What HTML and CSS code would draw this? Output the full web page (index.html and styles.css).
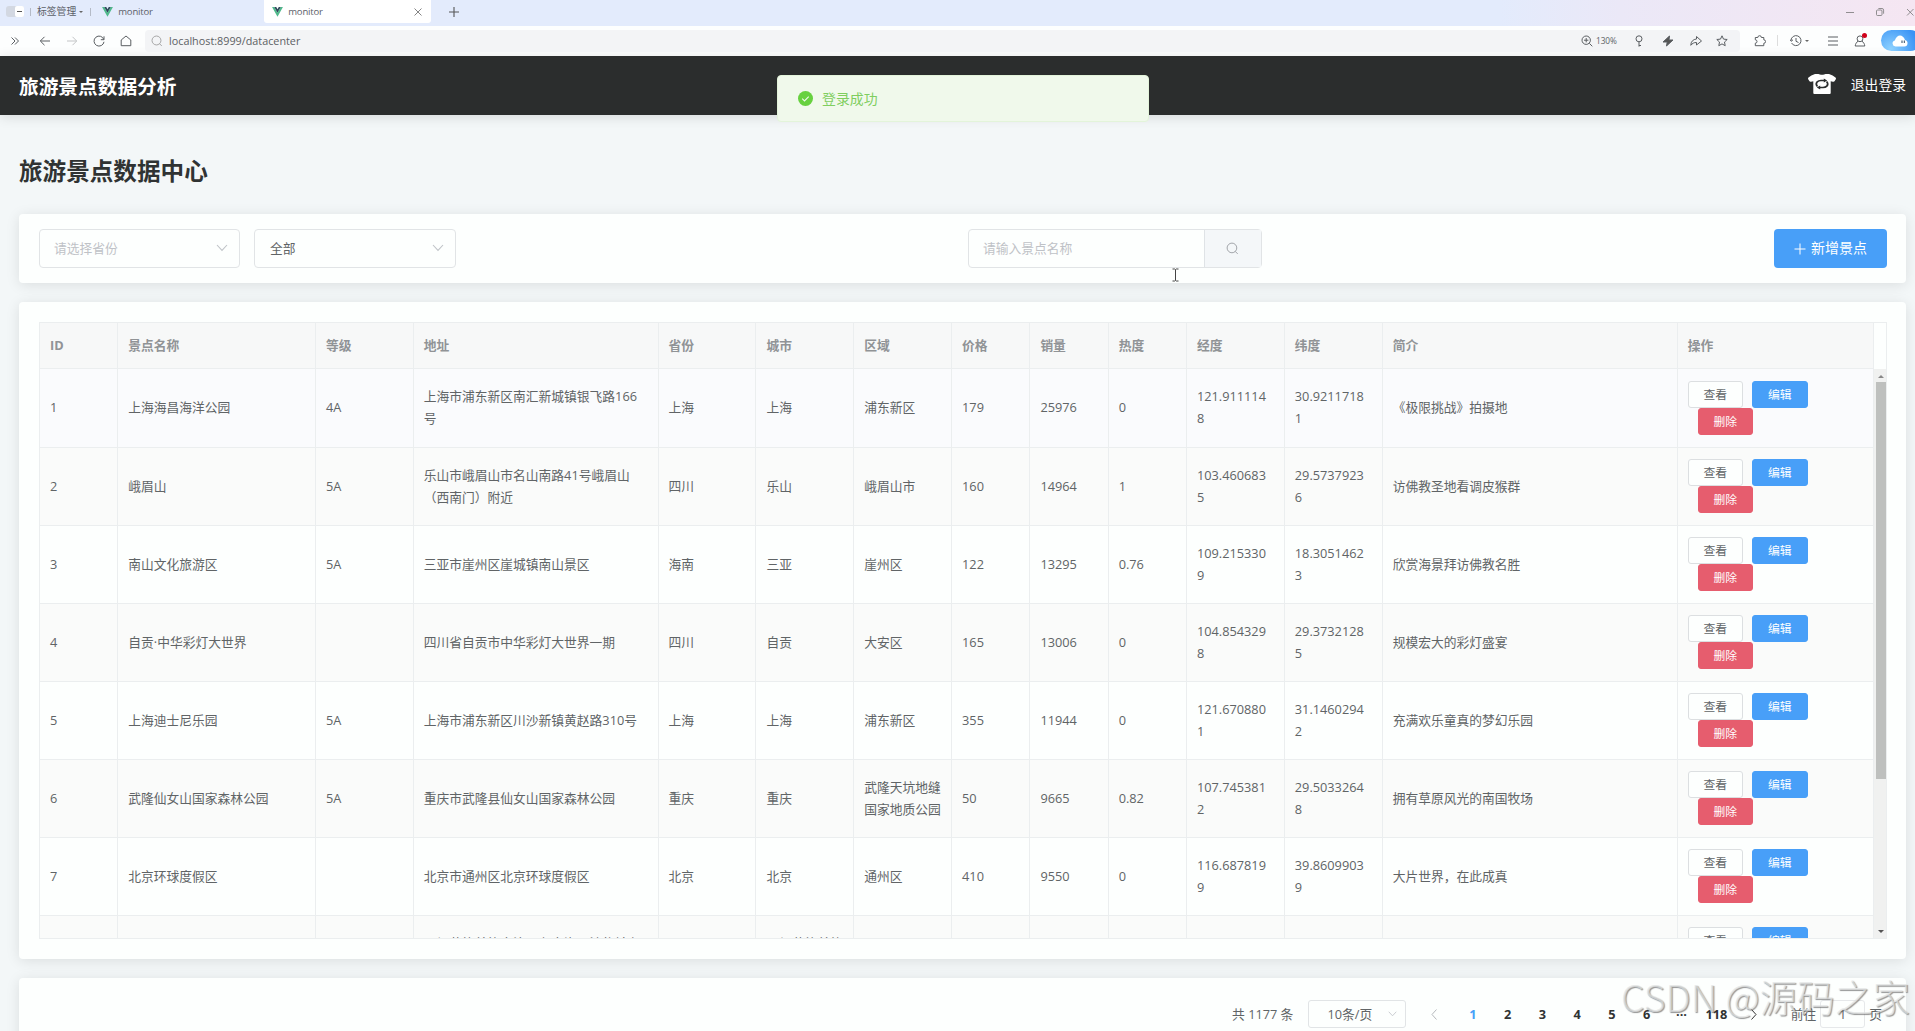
FILE: index.html
```html
<!DOCTYPE html>
<html lang="zh-CN">
<head>
<meta charset="utf-8">
<title>monitor</title>
<link rel="stylesheet" href="styles.css">
</head>
<body>
<svg class="defs" width="0" height="0" aria-hidden="true">
  <symbol id="vue" viewBox="0 0 12 11"><path d="M0 0h2.4L6 6.2 9.6 0H12L6 10.6z" fill="#4fba8b"/><path d="M2.4 0h2.2L6 2.4 7.4 0h2.2L6 6.2z" fill="#2f4a5c"/></symbol>
  <symbol id="chev" viewBox="0 0 12 8"><path d="M1 1l5 5.4L11 1" fill="none" stroke="currentColor" stroke-width="1.1"/></symbol>
  <symbol id="search" viewBox="0 0 14 14"><circle cx="6.4" cy="6.4" r="5.2" fill="none" stroke="currentColor"/><path d="M9.8 10l2.8 2.8" stroke="currentColor"/></symbol>
</svg>

<div class="tabs">
  <span class="panel-toggle"><i></i></span>
  <span class="sep"></span>
  <span class="tab-manage">标签管理</span><span class="caret"></span>
  <span class="sep sep-2"></span>
  <div class="tab"><svg class="vue"><use href="#vue"/></svg>monitor</div>
  <div class="tab active"><svg class="vue"><use href="#vue"/></svg>monitor
    <svg class="close" viewBox="0 0 8 8"><path d="M.5.5l7 7M7.5.5l-7 7"/></svg></div>
  <svg class="plus" viewBox="0 0 10 10"><path d="M5 0v10M0 5h10"/></svg>
  <div class="win">
    <svg viewBox="0 0 10 10"><path d="M1 5.5h8"/></svg>
    <svg viewBox="0 0 10 10"><rect x="1.5" y="3" width="5.5" height="5.5" rx="1"/><path d="M3.4 1.5h3.6a1.6 1.6 0 0 1 1.6 1.6v3.6"/></svg>
    <svg viewBox="0 0 10 10"><path d="M2 2l6.5 6.5M8.5 2L2 8.5"/></svg>
  </div>
</div>

<div class="toolbar">
  <div class="nav">
    <svg viewBox="0 0 12 12"><path d="M2.5 2.500l3.500 3.500-3.500 3.500M6 2.500l3.500 3.500L6 9.500"/></svg>
    <svg viewBox="0 0 12 12"><path d="M11 6H1.500M5.500 1.800L1.300 6l4.200 4.200"/></svg>
    <svg class="off" viewBox="0 0 12 12"><path d="M1 6h9.500M6.500 1.800L10.700 6l-4.200 4.200"/></svg>
    <svg viewBox="0 0 12 12"><path d="M10.800 4.500A5 5 0 1 0 11 6.800M11 1.300v3.400H7.800"/></svg>
    <svg viewBox="0 0 12 12"><path d="M1.200 5L6 1l4.800 4v5.700H1.200z"/></svg>
  </div>
  <div class="address">
    <svg class="lens"><use href="#search"/></svg>
    <span class="url">localhost:8999/datacenter</span>
    <svg viewBox="0 0 12 12"><circle cx="5.200" cy="5.200" r="4.200"/><path d="M8.300 8.300l3 3M3 5.200h4.400M5.200 3v4.400"/></svg>
    <span class="pct">130%</span>
    <svg class="key" viewBox="0 0 12 12"><circle cx="6" cy="3.800" r="3"/><path d="M6 6.800v4.800M6 10.500h2"/></svg>
    <svg class="bolt" viewBox="0 0 12 12"><path d="M7.500 1L1 7h4.200L4.500 11 11 5H7z"/></svg>
    <svg class="share" viewBox="0 0 12 12"><path d="M6.500 1.500L11.500 6l-5 4V7.500C4 7.400 2.300 8.400.8 10.300.8 6.500 3.200 4.300 6.500 4z"/></svg>
    <svg class="star" viewBox="0 0 12 12"><path d="M6 .8l1.500 3.300 3.700.4-2.700 2.500.7 3.700L6 8.900l-3.200 1.800.7-3.700L.8 4.500l3.700-.4z"/></svg>
  </div>
  <div class="tools">
    <svg class="puzzle" viewBox="0 0 12 12"><path d="M1.300 2.500h2.500a1.800 1.800 0 0 1 3.600 0h2.400v2.300a1.700 1.700 0 0 1 0 3.500v2.400H1.300V8.200a1.700 1.700 0 0 0 0-3.400z"/></svg>
    <span class="bar"></span>
    <svg class="hist" viewBox="0 0 12 12"><path d="M1.600 8A5 5 0 1 0 1 5.500M0 4.500l1.200 1.800L3 4.800M6 3v3.300l2.500 1.200"/></svg>
    <span class="caret"></span>
    <svg class="menu" viewBox="0 0 12 12"><path d="M1 2h10M1 6h10M1 10h10"/></svg>
    <span class="user"><svg viewBox="0 0 12 12"><circle cx="6" cy="3.800" r="2.900"/><path d="M4 6.200C2.400 7.400 1.500 8.700 1.200 11h9.600C10.500 8.700 9.600 7.400 8 6.200"/></svg><b></b></span>
    <span class="cloud"><svg viewBox="0 0 16 12"><path d="M3.500 11.500a3 3 0 0 1-.7-5.900C4 2 6 .5 8 .5s4 1.500 5 4.500a3.300 3.300 0 0 1-.5 6.500z" fill="#fff"/><path d="M10 5.500v2.500M12.300 5.500v2.500" stroke="#2b4660" stroke-width="1"/></svg></span>
  </div>
</div>

<header class="app-header">
  <span class="brand">旅游景点数据分析</span>
  <svg class="shirt" viewBox="0 0 28 20"><path d="M7 0h3.500c1.300.9 5.700.9 7 0H21q4 1 6.500 3.500.8.800.3 1.700L26.500 7.300Q26 8 25 7.700L22.700 7.200V19q0 1-1 1H6.300q-1 0-1-1V7.200L3 7.700Q2 8 1.500 7.300L.2 5.200Q-.3 4.300.5 3.500 3 1 7 0z" fill="#fff"/><g fill="none" stroke="#2b2d2d" stroke-width="1.700"><path d="M9.400 12.500Q7.200 10 9.200 7.800 10.500 6.500 13 6.500h3.500"/><path d="M18.600 7.500Q20.800 10 18.800 12.200 17.500 13.500 15 13.500h-3.500"/></g><path d="M15.800 4.600l3.400 2-3.400 1.900zM12.200 11.500l-3.400 1.900 3.400 2z" fill="#2b2d2d"/></svg>
  <span class="logout">退出登录</span>
</header>

<main>
  <h1>旅游景点数据中心</h1>

  <section class="card filters">
    <div class="select ph"><span>请选择省份</span><svg><use href="#chev"/></svg></div>
    <div class="select"><span>全部</span><svg><use href="#chev"/></svg></div>
    <div class="search"><span>请输入景点名称</span><b><svg><use href="#search"/></svg></b></div>
    <div class="add"><svg viewBox="0 0 12 12"><path d="M6 .5v11M.5 6h11"/></svg><span>新增景点</span></div>
  </section>

  <section class="card table-card">
    <div class="table-box">
      <table class="grid head">
        <colgroup><col class="w78"><col class="w198"><col class="w98"><col class="w245"><col class="w98"><col class="w98"><col class="w98"><col class="w78"><col class="w78"><col class="w78"><col class="w98"><col class="w98"><col class="w295"><col class="w196"></colgroup>
        <tr><th>ID</th><th>景点名称</th><th>等级</th><th>地址</th><th>省份</th><th>城市</th><th>区域</th><th>价格</th><th>销量</th><th>热度</th><th>经度</th><th>纬度</th><th>简介</th><th>操作</th></tr>
      </table>
      <div class="body">
        <table class="grid">
          <colgroup><col class="w78"><col class="w198"><col class="w98"><col class="w245"><col class="w98"><col class="w98"><col class="w98"><col class="w78"><col class="w78"><col class="w78"><col class="w98"><col class="w98"><col class="w295"><col class="w196"></colgroup>
          <tr class="hover"><td>1</td><td>上海海昌海洋公园</td><td>4A</td><td>上海市浦东新区南汇新城镇银飞路166号</td><td>上海</td><td>上海</td><td>浦东新区</td><td>179</td><td>25976</td><td>0</td><td class="geo">121.9111148</td><td class="geo">30.92117181</td><td>《极限挑战》拍摄地</td><td><span class="btn">查看</span><span class="btn edit">编辑</span><span class="btn del">删除</span></td></tr>
          <tr><td>2</td><td>峨眉山</td><td>5A</td><td>乐山市峨眉山市名山南路41号峨眉山（西南门）附近</td><td>四川</td><td>乐山</td><td>峨眉山市</td><td>160</td><td>14964</td><td>1</td><td class="geo">103.4606835</td><td class="geo">29.57379236</td><td>访佛教圣地看调皮猴群</td><td><span class="btn">查看</span><span class="btn edit">编辑</span><span class="btn del">删除</span></td></tr>
          <tr><td>3</td><td>南山文化旅游区</td><td>5A</td><td>三亚市崖州区崖城镇南山景区</td><td>海南</td><td>三亚</td><td>崖州区</td><td>122</td><td>13295</td><td>0.76</td><td class="geo">109.2153309</td><td class="geo">18.30514623</td><td>欣赏海景拜访佛教名胜</td><td><span class="btn">查看</span><span class="btn edit">编辑</span><span class="btn del">删除</span></td></tr>
          <tr><td>4</td><td>自贡·中华彩灯大世界</td><td></td><td>四川省自贡市中华彩灯大世界一期</td><td>四川</td><td>自贡</td><td>大安区</td><td>165</td><td>13006</td><td>0</td><td class="geo">104.8543298</td><td class="geo">29.37321285</td><td>规模宏大的彩灯盛宴</td><td><span class="btn">查看</span><span class="btn edit">编辑</span><span class="btn del">删除</span></td></tr>
          <tr><td>5</td><td>上海迪士尼乐园</td><td>5A</td><td>上海市浦东新区川沙新镇黄赵路310号</td><td>上海</td><td>上海</td><td>浦东新区</td><td>355</td><td>11944</td><td>0</td><td class="geo">121.6708801</td><td class="geo">31.14602942</td><td>充满欢乐童真的梦幻乐园</td><td><span class="btn">查看</span><span class="btn edit">编辑</span><span class="btn del">删除</span></td></tr>
          <tr><td>6</td><td>武隆仙女山国家森林公园</td><td>5A</td><td>重庆市武隆县仙女山国家森林公园</td><td>重庆</td><td>重庆</td><td>武隆天坑地缝国家地质公园</td><td>50</td><td>9665</td><td>0.82</td><td class="geo">107.7453812</td><td class="geo">29.50332648</td><td>拥有草原风光的南国牧场</td><td><span class="btn">查看</span><span class="btn edit">编辑</span><span class="btn del">删除</span></td></tr>
          <tr><td>7</td><td>北京环球度假区</td><td></td><td>北京市通州区北京环球度假区</td><td>北京</td><td>北京</td><td>通州区</td><td>410</td><td>9550</td><td>0</td><td class="geo">116.6878199</td><td class="geo">39.86099039</td><td>大片世界，在此成真</td><td><span class="btn">查看</span><span class="btn edit">编辑</span><span class="btn del">删除</span></td></tr>
          <tr class="last"><td></td><td></td><td></td><td>阿坝藏族羌族自治州九寨沟县漳扎镇九寨沟景区</td><td></td><td>阿坝藏族羌族自治州</td><td></td><td></td><td></td><td></td><td class="geo">103.9239778</td><td class="geo">33.14320581</td><td></td><td><span class="btn">查看</span><span class="btn edit">编辑</span></td></tr>
        </table>
        <div class="scroll"><i class="up"></i><div class="thumb"></div><i class="down"></i></div>
      </div>
    </div>
  </section>

  <section class="card pager">
    <span class="total">共 1177 条</span>
    <div class="size">10条/页<svg><use href="#chev"/></svg></div>
    <svg class="arrow prev" viewBox="0 0 6 11"><path d="M5.500.5l-4.500 5 4.500 5"/></svg>
    <b class="on">1</b><b>2</b><b>3</b><b>4</b><b>5</b><b>6</b><b>···</b><b>118</b>
    <svg class="arrow next" viewBox="0 0 6 11"><path d="M.5.5l4.500 5-4.500 5"/></svg>
    <span class="goto">前往</span><span class="page-input">1</span><span class="goto">页</span>
  </section>
</main>

<div class="message"><svg viewBox="0 0 15 15"><circle cx="7.500" cy="7.500" r="7.500" fill="#67d13f"/><path d="M4.200 7.700l2.300 2.200 4.200-4.300" fill="none" stroke="#f0f9eb" stroke-width="1.100"/></svg>登录成功</div>
<svg class="cursor" viewBox="0 0 7 14"><path d="M.5 1h2.200l.8.6.8-.6h2.200M3.500 1.500v11M.5 13h2.200l.8-.6.800.6h2.200"/></svg>
<div class="watermark">CSDN @源码之家</div>
</body>
</html>
```
FILE: styles.css
```css
* { box-sizing: border-box; }
body {
  margin: 0;
  width: 1915px;
  height: 1031px;
  overflow: hidden;
  position: relative;
  background: #f3f7f8;
  color: #606466;
  font: 12.75px/22px "Open Sans", "Noto Sans CJK SC", sans-serif;
}
svg { display: block; flex: none; }
.defs { position: absolute; }

/* browser tab strip */
.tabs {
  display: flex;
  align-items: center;
  height: 26px;
  padding: 0 0 3px 6px;
  background: linear-gradient(90deg, #e3ebfc 0, #e3ebfc 1500px, #ebe8f7 1620px, #f5e6f2 1915px);
  font-size: 9.8px;
  line-height: 22px;
  color: #5b6068;
}
.panel-toggle { width: 18px; height: 11px; border-radius: 3px; background: #d3d8e2; padding: 0 0 0 9px; }
.panel-toggle i { display: block; height: 11px; border-radius: 2px; background: linear-gradient(#555, #555) center / 5px 1px no-repeat #fff; }
.sep { width: 1px; height: 8px; background: #b5bbc7; margin: 0 6px; }
.sep-2 { margin: 0 11px 0 7px; }
.caret { border: 2px solid transparent; border-top: 2.5px solid #666; border-bottom: 0; margin-left: 3px; }
.tab { display: flex; align-items: center; width: 162px; height: 23px; gap: 5px; font-size: 9.5px; letter-spacing: -.15px; }
.vue { width: 11px; height: 10px; }
.tab.active { background: #fff; width: 167px; padding: 0 9px 0 8px; border-radius: 0 0 3px 3px; }
.close { width: 8px; height: 8px; margin-left: auto; fill: none; stroke: #777; stroke-width: .9; }
.plus { width: 10px; height: 10px; margin-left: 18px; fill: none; stroke: #555; stroke-width: 1.1; }
.win { display: flex; gap: 20px; margin-left: auto; width: 70px; }
.win svg { width: 10px; height: 10px; fill: none; stroke: #777; stroke-width: .8; }

/* browser toolbar */
.toolbar { display: flex; align-items: center; height: 30px; background: #fdfefe; padding: 0 0 1px 9px; }
.toolbar svg { width: 12px; height: 12px; fill: none; stroke: #5a5e62; stroke-width: 1; }
.nav { display: flex; flex: none; width: 136px; gap: 15px; }
.nav svg:first-child { margin-right: 3px; }
.nav .off { opacity: .35; }
.address { display: flex; flex: none; align-items: center; width: 1595px; height: 22px; padding: 0 12px 0 6px; background: #f3f4f6; border-radius: 4px; }
.address .lens { color: #999; stroke: none; }
.url { margin: 0 auto 0 6px; font-size: 10.8px; color: #5c6064; }
.pct { font-size: 8.3px; margin: 0 15px 0 3px; width: 22px; letter-spacing: -.1px; }
.address .key { margin-right: 17px; }
.address .bolt { fill: #555; margin-right: 16px; }
.address .share { margin-right: 14px; }
.tools { display: flex; flex: none; align-items: center; margin-left: 14px; }
.tools .bar { width: 1px; height: 11px; background: #ddd; margin: 0 12px 0 11px; }
.tools .menu { margin: 0 15px 0 18px; }
.user { position: relative; }
.user b { position: absolute; width: 5px; height: 5px; top: -2px; right: -1px; border-radius: 50%; background: #d0021b; }
.cloud { flex: none; width: 40px; height: 21px; margin-left: 15px; padding: 5px 0 0 11px; border-radius: 11px; background: radial-gradient(circle at 25% 90%, #8dd1ff, #3a93f5 75%); }
.toolbar .cloud svg { width: 16px; height: 12px; stroke: none; }

/* application header */
.app-header { display: flex; align-items: center; height: 59px; padding: 0 9px 0 19px; background: #2b2d2d; color: #fff; box-shadow: 0 2px 12px rgba(0, 0, 0, .12); }
.brand { margin: 2px auto 0 0; font-size: 19.7px; font-weight: 700; }
.shirt { width: 28px; height: 20px; margin: -3px 15px 0 0; }
.logout { margin-top: -2px; font-size: 13.8px; }

main { padding: 39px 9px 0 19px; }
h1 { margin: 0 0 26px; font-size: 23.6px; line-height: 34px; font-weight: 700; color: #303333; }
.card { background: #fdfffe; border-radius: 4px; box-shadow: 0 2px 14px rgba(0, 0, 0, .1); }

.filters { display: flex; height: 69px; padding: 15px 19px 15px 20px; margin-bottom: 19px; }
.select { display: flex; align-items: center; justify-content: space-between; width: 201px; height: 39px; margin-right: 14px; padding: 0 11px 2px 14px; border: 1px solid #e1e4e6; border-radius: 4px; }
.select + .select { width: 202px; padding-left: 15px; }
.select svg { width: 12px; height: 8px; margin-top: 1px; color: #c0c4c8; }
.ph { color: #bfc2c7; }
.search { display: flex; width: 294px; height: 39px; margin-left: 498px; border: 1px solid #e1e4e6; border-radius: 4px; color: #bfc2c7; line-height: 36px; }
.search span { flex: 1; padding-left: 14px; }
.search b { display: flex; align-items: center; justify-content: center; width: 57px; padding-right: 2px; border-left: 1px solid #dfe3e6; background: #f4f7f9; }
.search svg { width: 13px; height: 13px; color: #9a9ea3; }
.add { display: flex; align-items: center; gap: 5px; width: 113px; height: 39px; margin-left: auto; padding-left: 20px; border-radius: 4px; background: #489ff8; color: #fff; font-size: 14px; }
.add span { margin-top: -2px; }
.add svg { width: 12px; height: 12px; stroke: #fff; }

.table-card { height: 657px; padding: 20px 19px 20px 20px; margin-bottom: 19px; }
.table-box { height: 617px; border: 1px solid #ebeeef; overflow: hidden; }
.grid { table-layout: fixed; border-collapse: separate; border-spacing: 0; width: 1834px; }
.w78 { width: 78.3px; }
.w98 { width: 97.85px; }
.w198 { width: 197.7px; }
.w245 { width: 244.7px; }
.w295 { width: 295.2px; }
.w196 { width: 196px; }
th, td { padding: 0 9px 2px 10px; text-align: left; border-right: 1px solid #ebeeef; border-bottom: 1px solid #ebeeef; }
th { height: 46px; background: #f7f8f8; color: #909396; }
td { height: 78px; word-break: break-all; }
td.geo { padding-right: 13px; }
tr:nth-child(even) td { background: #fafbfa; }
tr.hover td { height: 79px; background: #fafbfd; }
.body { display: flex; height: 570px; }
.body .grid { flex: none; }
td:last-child { font-size: 0; padding: 11px 9px 12px 10px; }
tr.last td:last-child { vertical-align: top; }
.btn { display: inline-block; vertical-align: top; width: 55px; height: 27px; border: 1px solid #dcdfe1; border-radius: 3px; background: #fdfffe; font-size: 11.8px; line-height: 24px; text-align: center; }
.edit { width: 56px; margin: 0 30px 0 9px; background: #489ff8; border-color: #489ff8; color: #fff; }
.del { margin-left: 10px; background: #e65d6e; border-color: #e65d6e; color: #fff; }
.scroll { display: flex; flex-direction: column; align-items: center; flex: none; width: 13px; height: 569px; padding: 6px 0 5px; background: #f0f1f0; }
.scroll i { border: 3px solid transparent; }
.scroll .up { border-bottom-color: #888; border-top: 0; }
.scroll .down { border-top-color: #555; border-bottom: 0; margin-top: auto; }
.thumb { width: 10px; height: 397px; margin-top: 4px; background: #bec0be; }

.pager { display: flex; align-items: center; height: 72px; padding-right: 24px; justify-content: flex-end; }
.size { display: flex; align-items: center; justify-content: space-between; width: 98px; height: 28px; margin: 0 25px 0 15px; padding: 0 8px 0 18px; border: 1px solid #e1e4e6; border-radius: 3px; }
.size svg { width: 9px; height: 6px; color: #c0c4c8; }
.arrow { width: 6px; height: 11px; fill: none; stroke: #b5b8bc; }
.prev { margin-right: 18px; }
.pager b { width: 34.8px; text-align: center; color: #303333; }
.pager b.on { color: #489ff8; }
.next { stroke: #333; margin: 0 34px 0 17px; }
.page-input { width: 45px; height: 28px; margin: 0 4px; border: 1px solid #e6e8ea; border-radius: 3px; line-height: 26px; text-align: center; }

/* overlays */
.message { position: absolute; left: 777px; top: 75px; width: 372px; height: 47px; display: flex; align-items: center; gap: 9px; padding: 0 0 0 20px; background: #f0f9eb; border: 1px solid #e3f4da; border-radius: 4px; color: #7fce5f; font-size: 13.9px; }
.message svg { width: 15px; height: 15px; }
.cursor { position: absolute; left: 1172px; top: 268px; width: 7px; height: 14px; fill: none; stroke: #444; }
.watermark { position: absolute; left: 1621px; top: 971px; font-size: 37.6px; line-height: 50px; white-space: nowrap; color: rgba(226, 228, 228, .7); text-shadow: 1px 1px 1px rgba(90, 90, 90, .65); font-family: "Noto Sans CJK SC", sans-serif; font-weight: 300; }
```
